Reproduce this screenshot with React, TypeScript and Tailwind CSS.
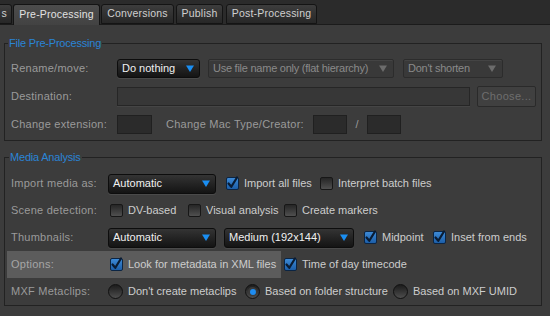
import React from 'react'

const FONT = "font-['Liberation_Sans',Arial,sans-serif]"

function Tri({ color }: { color: string }) {
  return (
    <svg width="8" height="7" viewBox="0 0 8 7" className="shrink-0">
      <path d="M0 0.5 H8 L4 7 Z" fill={color} />
    </svg>
  )
}

function Dropdown({ text, className }: { text: string; className: string }) {
  return (
    <div
      className={`flex items-center justify-between pl-[4px] pr-[5px] rounded-[3px] border border-[#0d0d0d] bg-gradient-to-b from-[#343434] to-[#141414] text-[#f0f0f0] shadow-[0_1px_0_#4a4a4a] ${className}`}
    >
      <span>{text}</span>
      <Tri color="#1a8ef2" />
    </div>
  )
}

function DisabledDropdown({ text, className }: { text: string; className: string }) {
  return (
    <div
      className={`flex items-center justify-between pl-[4px] pr-[6px] rounded-[2px] border border-[#2c2c2c] bg-[#393939] text-[#8a8a8a] tracking-[-0.25px] shadow-[inset_0_1px_0_#444] ${className}`}
    >
      <span className="whitespace-nowrap">{text}</span>
      <Tri color="#6c6c6c" />
    </div>
  )
}

function Check({ checked, label, className = '' }: { checked?: boolean; label: string; className?: string }) {
  return (
    <div className={`flex items-center gap-[5px] shrink-0 ${className}`}>
      {checked ? (
        <div className="w-[13px] h-[13px] rounded-[2px] border border-[#0b2544] bg-gradient-to-b from-[#3d8ad6] to-[#1c5ea8] flex items-center justify-center overflow-visible">
          <svg width="13" height="13" viewBox="0 0 13 13" className="overflow-visible">
            <path d="M2.5 6.5 L5.3 9.8 L11 0.5" stroke="#0a1c33" strokeWidth="2.2" fill="none" strokeLinecap="round" strokeLinejoin="round" />
          </svg>
        </div>
      ) : (
        <div className="w-[13px] h-[13px] rounded-[2px] border border-[#171717] bg-gradient-to-b from-[#262626] to-[#505050]" />
      )}
      <span className="text-[#cdcdcd] whitespace-nowrap">{label}</span>
    </div>
  )
}

function Radio({ selected, label, className = '' }: { selected?: boolean; label: string; className?: string }) {
  return (
    <div className={`flex items-center gap-[5px] shrink-0 ${className}`}>
      <div className="w-[15px] h-[15px] rounded-full border border-[#111] bg-gradient-to-b from-[#1c1c1c] to-[#4e4e4e] flex items-center justify-center">
        {selected && (
          <div className="w-[9px] h-[9px] rounded-full bg-[#3a3a3a] flex items-center justify-center">
            <div className="w-[6px] h-[6px] rounded-full bg-[#1e8cf0]" />
          </div>
        )}
      </div>
      <span className="text-[#cdcdcd] whitespace-nowrap">{label}</span>
    </div>
  )
}

function Label({ children, className }: { children: React.ReactNode; className: string }) {
  return <div className={`shrink-0 text-[#9a9a9a] tracking-[0.25px] whitespace-nowrap ${className}`}>{children}</div>
}

const tabBase = 'h-[20px] flex items-center justify-center rounded-t-[3px] border border-[#141414] text-[10.5px] tracking-[0.2px] shrink-0'
const tabOff = `${tabBase} bg-gradient-to-b from-[#3d3d3d] to-[#272727] text-[#d0d0d0]`

export default function App() {
  return (
    <div className={`w-[550px] h-[316px] overflow-hidden bg-[#3c3c3c] text-[11px] ${FONT}`}>
      {/* tab strip */}
      <div className="h-[25px] flex items-end bg-[#2b2b2b] border-b border-[#1b1b1b]">
        <div className={`${tabOff} w-[60px] -ml-[48px] justify-end pr-[4px]`}>s</div>
        <div className={`${tabBase} w-[87px] ml-px h-[21px] -mb-px border-b-0 bg-gradient-to-b from-[#4c4c4c] to-[#424242] text-[#e2e2e2]`}>
          Pre-Processing
        </div>
        <div className={`${tabOff} w-[73px] ml-px`}>Conversions</div>
        <div className={`${tabOff} w-[47px] ml-[2px]`}>Publish</div>
        <div className={`${tabOff} w-[91px] ml-[3px]`}>Post-Processing</div>
      </div>

      <div className="pl-[4px] pt-[11px]">
        {/* File Pre-Processing */}
        <fieldset className="w-[538px] border border-[#222] px-px pb-[2px]">
          <legend className="ml-[2px] px-px leading-[14px] text-[#2a84d6] tracking-[-0.2px]">File Pre-Processing</legend>
          <div className="pt-[4px]">
            <div className="h-[28px] flex items-center">
              <Label className="w-[111px] pl-[5px]">Rename/move:</Label>
              <Dropdown text="Do nothing" className="w-[83px] h-[19px]" />
              <DisabledDropdown text="Use file name only (flat hierarchy)" className="w-[186px] h-[19px] ml-[8px]" />
              <DisabledDropdown text="Don't shorten" className="w-[100px] h-[19px] ml-[9px]" />
            </div>
            <div className="h-[28px] flex items-center">
              <Label className="w-[111px] pl-[5px]">Destination:</Label>
              <div className="w-[353px] h-[19px] border border-[#262626] bg-[#373737] shadow-[0_1px_0_#454545]" />
              <div className="w-[59px] h-[21px] ml-[7px] flex items-center justify-center rounded-[2px] border border-[#2a2a2a] bg-[#404040] text-[#6e6e6e] tracking-[0.3px]">
                Choose...
              </div>
            </div>
            <div className="h-[28px] flex items-center">
              <Label className="w-[111px] pl-[5px]">Change extension:</Label>
              <div className="w-[35px] h-[19px] border border-[#202020] bg-[#2b2b2b]" />
              <Label className="w-[161px] pl-[14px]">Change Mac Type/Creator:</Label>
              <div className="w-[34px] h-[19px] border border-[#202020] bg-[#2b2b2b]" />
              <div className="w-[20px] text-center text-[#9a9a9a]">/</div>
              <div className="w-[34px] h-[19px] border border-[#202020] bg-[#2b2b2b]" />
            </div>
          </div>
        </fieldset>

        {/* Media Analysis */}
        <fieldset className="w-[538px] mt-[9px] border border-[#222] px-[2px]">
          <legend className="ml-[2px] px-px leading-[14px] text-[#2a84d6] tracking-[-0.2px]">Media Analysis</legend>
          <div className="pt-[6px]">
            <div className="h-[27px] flex items-center">
              <Label className="w-[101px] pl-[4px]">Import media as:</Label>
              <Dropdown text="Automatic" className="w-[108px] h-[20px]" />
              <Check checked label="Import all files" className="ml-[10px] w-[94px]" />
              <Check label="Interpret batch files" />
            </div>
            <div className="h-[27px] flex items-center">
              <Label className="w-[101px] pl-[4px]">Scene detection:</Label>
              <Check label="DV-based" className="ml-[2px] w-[78px]" />
              <Check label="Visual analysis" className="w-[96px]" />
              <Check label="Create markers" />
            </div>
            <div className="h-[27px] flex items-center">
              <Label className="w-[101px] pl-[4px]">Thumbnails:</Label>
              <Dropdown text="Automatic" className="w-[108px] h-[20px]" />
              <Dropdown text="Medium (192x144)" className="w-[130px] h-[20px] ml-[8px]" />
              <Check checked label="Midpoint" className="ml-[10px] w-[69px]" />
              <Check checked label="Inset from ends" />
            </div>
            <div className="h-[27px] flex items-center">
              <div className="w-[274px] h-[27px] flex items-center bg-[#5c5c5c]">
                <Label className="w-[101px] pl-[4px] !text-[#a6a6a6]">Options:</Label>
                <Check checked label="Look for metadata in XML files" className="ml-[2px]" />
              </div>
              <Check checked label="Time of day timecode" className="ml-[3px]" />
            </div>
            <div className="h-[27px] flex items-center">
              <Label className="w-[101px] pl-[4px]">MXF Metaclips:</Label>
              <Radio label="Don't create metaclips" className="w-[137px]" />
              <Radio selected label="Based on folder structure" className="w-[148px]" />
              <Radio label="Based on MXF UMID" />
            </div>
          </div>
        </fieldset>
      </div>
    </div>
  )
}
